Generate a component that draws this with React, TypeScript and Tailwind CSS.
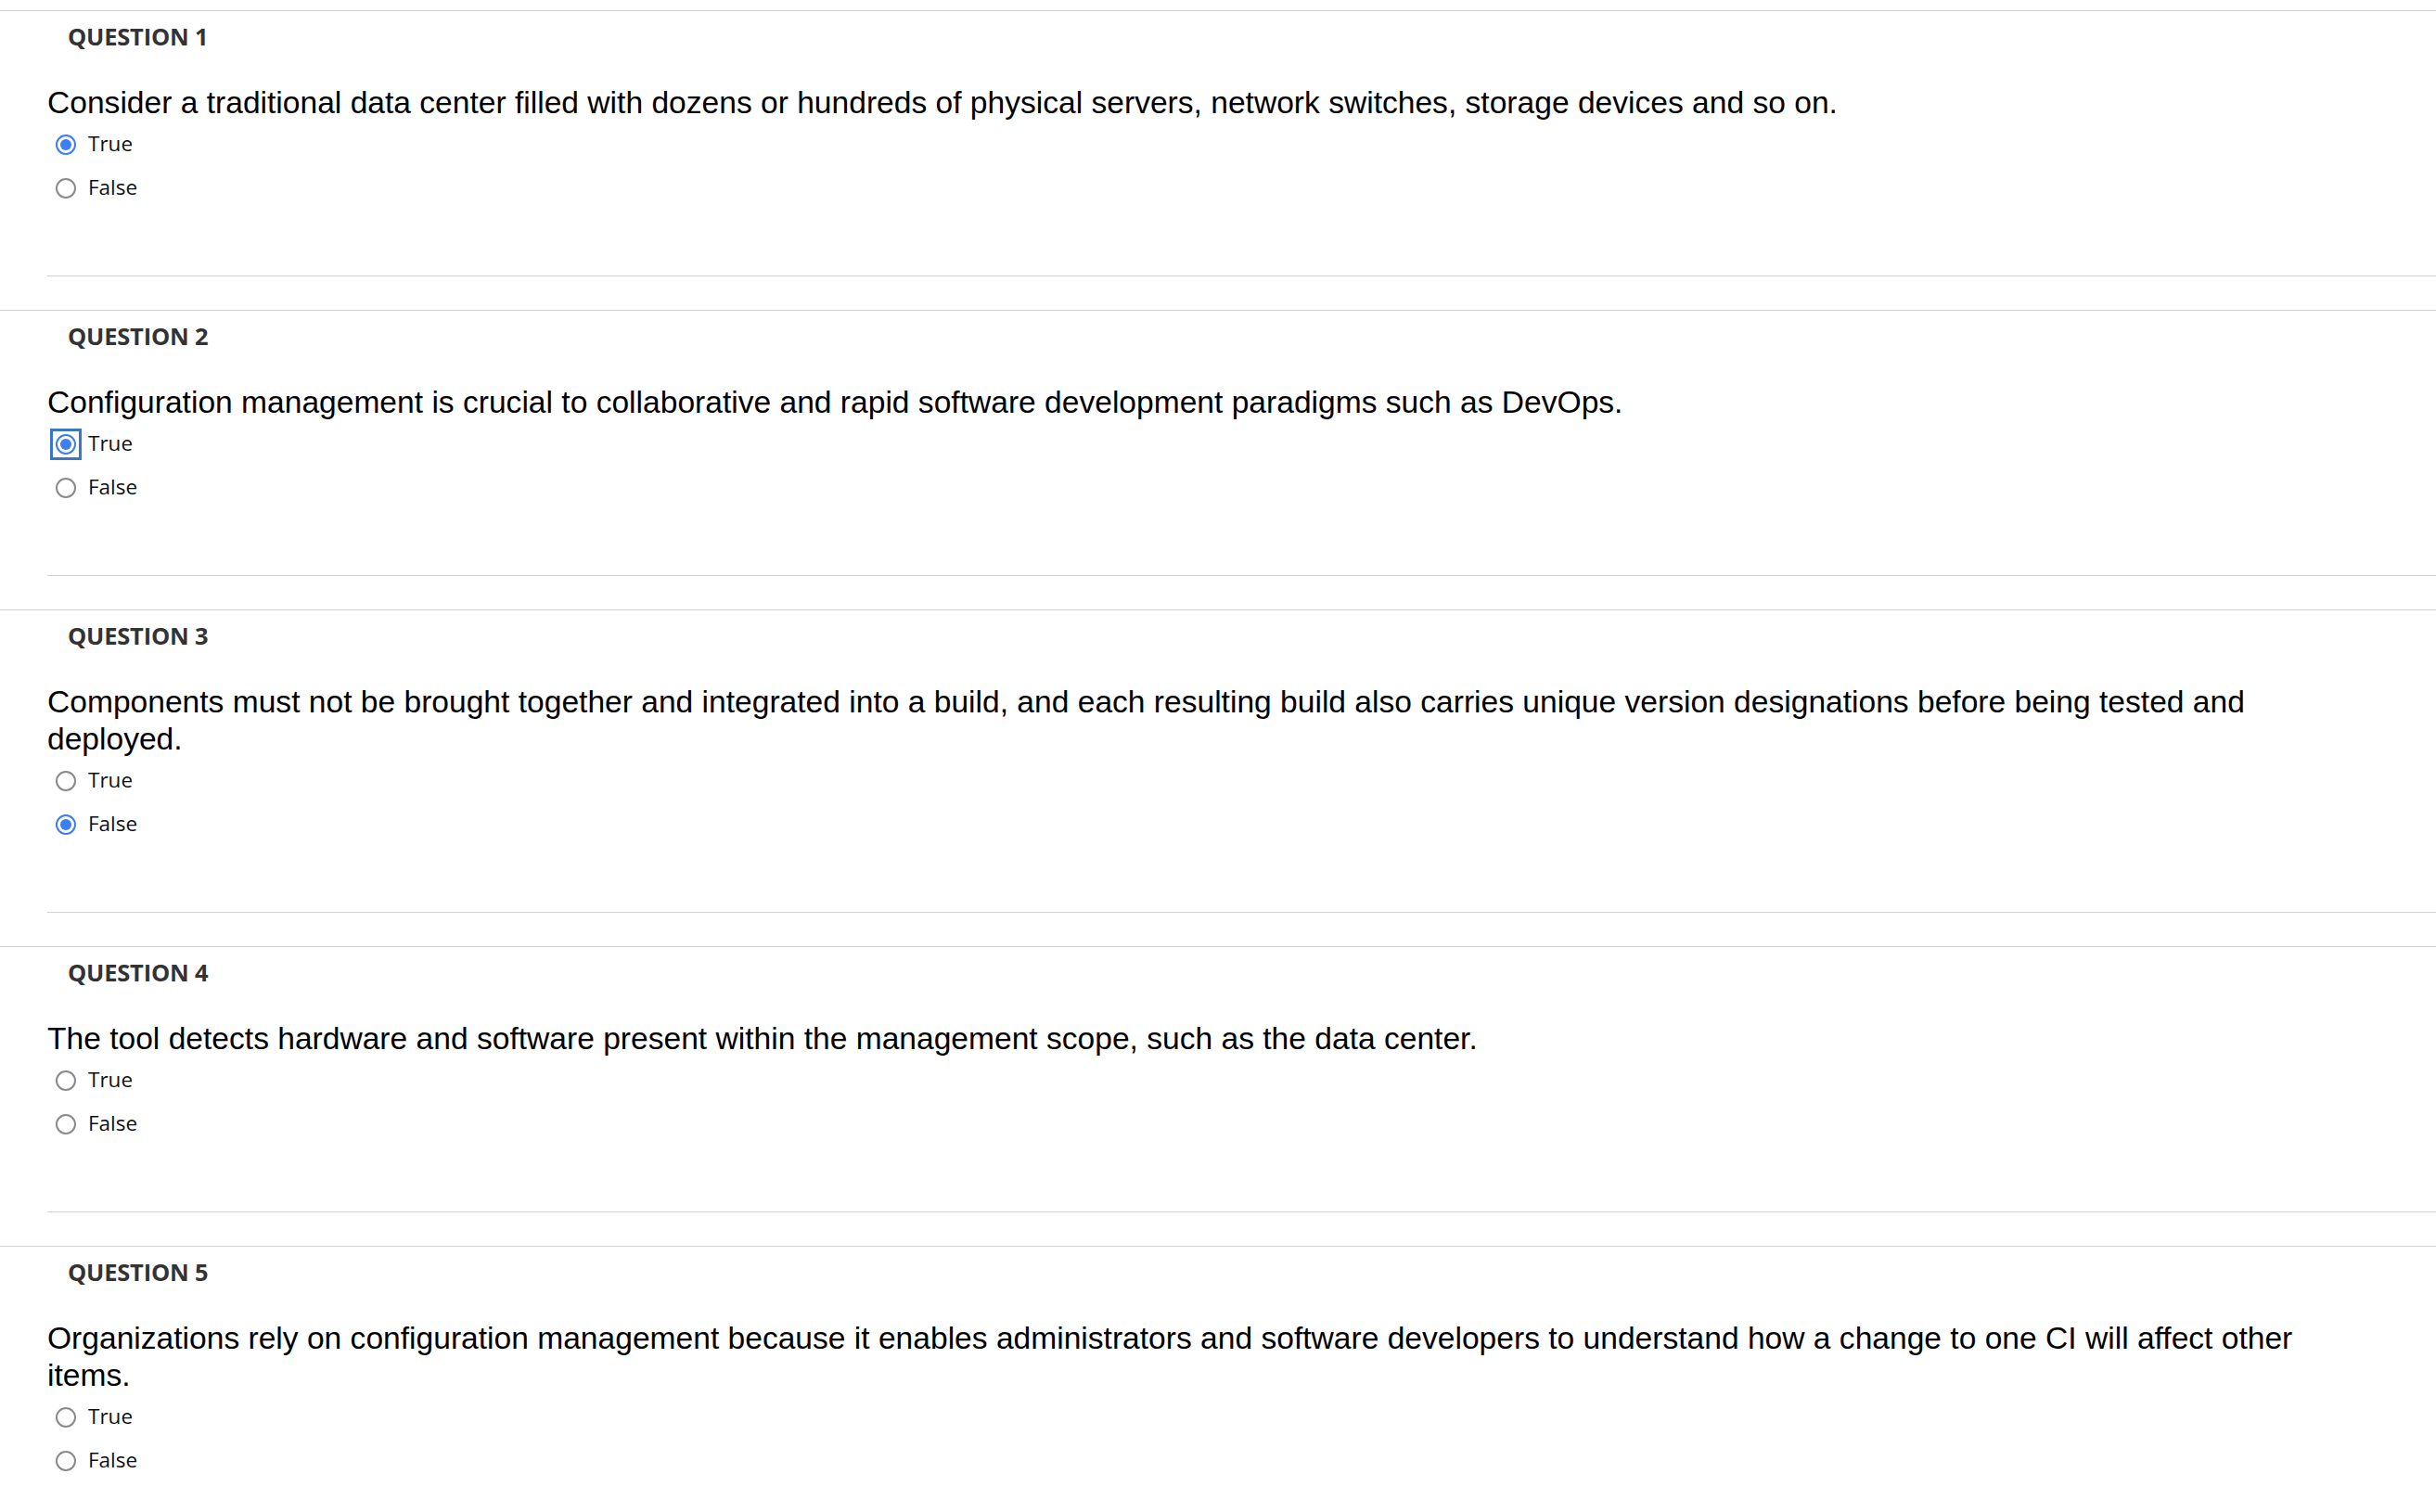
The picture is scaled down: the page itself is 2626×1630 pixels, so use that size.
import React from "react";

type Question = {
  id: number;
  text: string;
  answer: "True" | "False" | null;
  focused?: boolean;
};

const questions: Question[] = [
  {
    id: 1,
    text: "Consider a traditional data center filled with dozens or hundreds of physical servers, network switches, storage devices and so on.",
    answer: "True",
  },
  {
    id: 2,
    text: "Configuration management is crucial to collaborative and rapid software development paradigms such as DevOps.",
    answer: "True",
    focused: true,
  },
  {
    id: 3,
    text: "Components must not be brought together and integrated into a build, and each resulting build also carries unique version designations before being tested and deployed.",
    answer: "False",
  },
  {
    id: 4,
    text: "The tool detects hardware and software present within the management scope, such as the data center.",
    answer: null,
  },
  {
    id: 5,
    text: "Organizations rely on configuration management because it enables administrators and software developers to understand how a change to one CI will affect other items.",
    answer: null,
  },
];

// radio circle, drawn by hand so it matches the big native one
const RadioDot = ({ checked }: { checked: boolean }) =>
  checked ? (
    <span className="flex h-[22px] w-[22px] items-center justify-center rounded-full border-2 border-[#3d7ef2] bg-white">
      <span className="h-[12px] w-[12px] rounded-full bg-[#3d7ef2]" />
    </span>
  ) : (
    <span className="h-[22px] w-[22px] rounded-full border-2 border-[#8a8a8a] bg-white" />
  );

const Option = ({
  label,
  checked,
  focused,
}: {
  label: string;
  checked: boolean;
  focused?: boolean;
}) => (
  <div className="flex h-[47px] items-center pl-[60px]">
    {focused ? (
      <span className="-m-[6px] flex border-[3px] border-[#3a76c6] p-[3px]">
        <RadioDot checked={checked} />
      </span>
    ) : (
      <RadioDot checked={checked} />
    )}
    <span className="ml-[13px] text-[22.5px] leading-none text-[#111]">{label}</span>
  </div>
);

const QuestionBlock = ({ q }: { q: Question }) => (
  <div className="border-t border-[#d2d2d2]">
    <h3 className="pl-[73px] pt-[14px] text-[25.5px] font-bold leading-[26px] tracking-[-0.2px] text-[#333]">
      QUESTION {q.id}
    </h3>
    <p
      className="mt-[39px] pl-[51px] pr-[110px] text-[33.6px] leading-[40px] text-black"
      style={{ fontFamily: '"Liberation Sans", Arial, sans-serif' }}
    >
      {q.text}
    </p>
    <div className="mt-[1px]">
      <Option
        label="True"
        checked={q.answer === "True"}
        focused={q.focused && q.answer === "True"}
      />
      <Option label="False" checked={q.answer === "False"} />
    </div>
    <div className="mt-[71px] ml-[51px] border-b border-[#d2d2d2]" />
    <div className="h-[36px]" />
  </div>
);

export default function App() {
  return (
    <div
      className="min-h-screen bg-white pt-[11px]"
      style={{ fontFamily: '"Open Sans", "Noto Sans", sans-serif' }}
    >
      {questions.map((q) => (
        <QuestionBlock key={q.id} q={q} />
      ))}
    </div>
  );
}
